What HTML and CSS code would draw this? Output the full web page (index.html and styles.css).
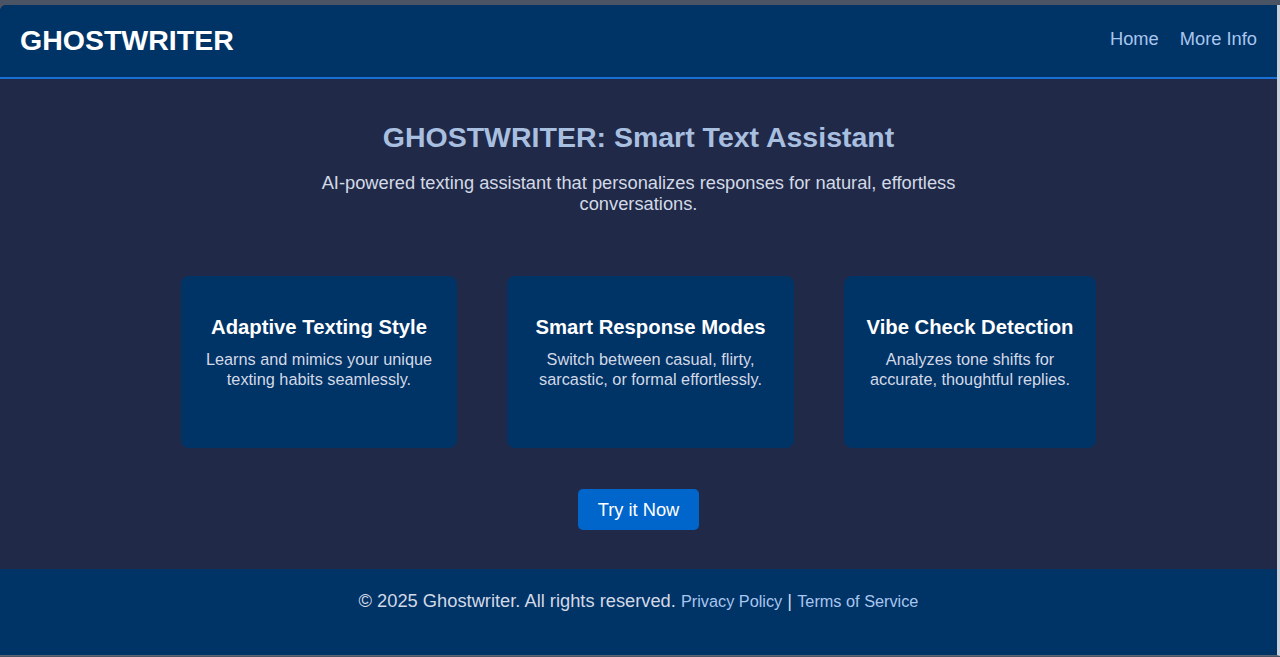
FILE: index.html
```html
<!DOCTYPE html>
<html lang="en">
<head>
<meta charset="utf-8">
<title>Ghostwriter</title>
<link rel="stylesheet" href="styles.css">
</head>
<body>
<div class="frame">
  <header class="site-header">
    <div class="logo">GHOSTWRITER</div>
    <nav class="nav">
      <a href="#" class="nav-link">Home</a>
      <a href="#" class="nav-link">More Info</a>
    </nav>
  </header>
  <main class="main">
    <section class="hero">
      <h1 class="hero-title">GHOSTWRITER: Smart Text Assistant</h1>
      <p class="hero-sub">AI-powered texting assistant that personalizes responses for natural, effortless conversations.</p>
    </section>
    <section class="features">
      <div class="card card-a">
        <h3 class="card-title">Adaptive Texting Style</h3>
        <p class="card-text">Learns and mimics your unique texting habits seamlessly.</p>
      </div>
      <div class="card card-b">
        <h3 class="card-title">Smart Response Modes</h3>
        <p class="card-text">Switch between casual, flirty, sarcastic, or formal effortlessly.</p>
      </div>
      <div class="card card-c">
        <h3 class="card-title">Vibe Check Detection</h3>
        <p class="card-text">Analyzes tone shifts for accurate, thoughtful replies.</p>
      </div>
    </section>
    <div class="cta-wrap">
      <a href="#" class="cta">Try it Now</a>
    </div>
  </main>
  <footer class="footer">
    <p class="footer-text">© 2025 Ghostwriter. All rights reserved. <a href="#" class="footer-link">Privacy Policy</a> | <a href="#" class="footer-link">Terms of Service</a></p>
  </footer>
</div>
</body>
</html>
```
FILE: styles.css
```css
* { box-sizing: border-box; }
html, body { margin: 0; padding: 0; }
body {
  background: #4a5465;
  font-family: "Liberation Sans", Arial, sans-serif;
  height: 657px;
  overflow: hidden;
}
.frame {
  margin-top: 5px;
  width: 1280px;
  height: 651px;
  border-right: 3px solid #c9d1dc;
  border-bottom: 1px solid #5a6472;
  border-top-left-radius: 6px;
  overflow: hidden;
  display: flex;
  flex-direction: column;
  background: #202a48;
}
.site-header {
  background: #003366;
  height: 74px;
  border-bottom: 2px solid #1a6fd4;
  display: flex;
  align-items: center;
  justify-content: space-between;
  padding: 0 20px;
}
.logo {
  color: #ffffff;
  font-size: 28.5px;
  font-weight: bold;
  padding-bottom: 1px;
}
.nav { display: flex; gap: 21px; padding-bottom: 5px; }
.nav-link {
  color: #a9c6ee;
  text-decoration: none;
  font-size: 18.3px;
}
.main {
  flex: 1;
  display: flex;
  flex-direction: column;
  align-items: center;
  padding-top: 42px;
}
.hero { text-align: center; }
.hero-title {
  margin: 0;
  font-size: 28.5px;
  color: #a9bfe0;
  line-height: 32px;
}
.hero-sub {
  margin: 19px auto 0;
  max-width: 700px;
  font-size: 18.3px;
  line-height: 21px;
  color: #d3d9e6;
}
.features {
  margin-top: 62px;
  display: flex;
  gap: 50px;
}
.card {
  background: #003366;
  border-radius: 8px;
  height: 172px;
  padding: 39px 20px 0;
  text-align: center;
}
.card-a { width: 276px; }
.card-b { width: 287px; }
.card-c { width: 252px; }
.card-title {
  margin: 0;
  font-size: 20.3px;
  line-height: 24px;
  color: #ffffff;
}
.card-text {
  margin: 10px 0 0;
  font-size: 16.3px;
  line-height: 20px;
  color: #d3d9e6;
}
.cta-wrap { margin-top: 41px; }
.cta {
  display: inline-block;
  background: #0066cc;
  color: #ffffff;
  text-decoration: none;
  font-size: 18.3px;
  line-height: 41px;
  height: 41px;
  padding: 0 20px;
  border-radius: 5px;
}
.footer {
  background: #003366;
  height: 86px;
  display: flex;
  justify-content: center;
  padding-top: 21px;
}
.footer-text {
  margin: 0;
  font-size: 18.3px;
  line-height: 22px;
  color: #d3d9e6;
}
.footer-link {
  color: #a9c6ee;
  text-decoration: none;
  font-size: 16.3px;
}
```
